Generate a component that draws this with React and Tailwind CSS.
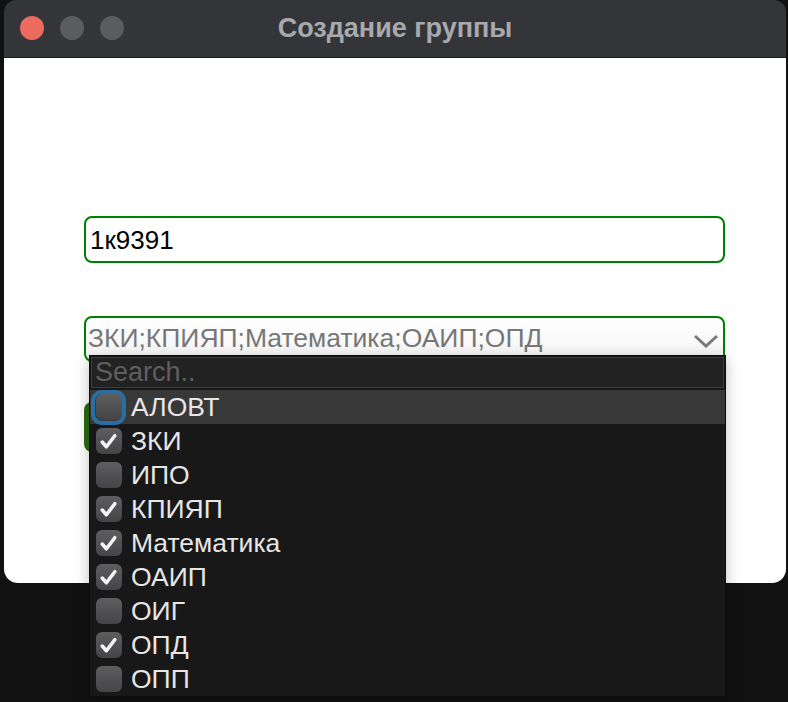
import { useState } from "react";

const subjects = [
  { name: "АЛОВТ", checked: false },
  { name: "ЗКИ", checked: true },
  { name: "ИПО", checked: false },
  { name: "КПИЯП", checked: true },
  { name: "Математика", checked: true },
  { name: "ОАИП", checked: true },
  { name: "ОИГ", checked: false },
  { name: "ОПД", checked: true },
  { name: "ОПП", checked: false },
];

function Check({ checked, focused }) {
  return (
    <div
      className={
        "flex h-[27px] w-[27px] shrink-0 items-center justify-center rounded-[7px] " +
        (focused ? "ring-[4px] ring-[#2a6fa3]" : "")
      }
    >
      <div className="flex h-[26px] w-[26px] items-center justify-center rounded-[6px] bg-gradient-to-b from-[#5e5e60] to-[#454547]">
        {checked && (
          <svg width="21" height="21" viewBox="0 0 20 20" fill="none">
            <path d="M4 10.5 L8 15 L16 4.5" stroke="#f4f4f4" strokeWidth="3.4" strokeLinecap="round" strokeLinejoin="round" />
          </svg>
        )}
      </div>
    </div>
  );
}

export default function App() {
  const [name] = useState("1к9391");
  const selected = subjects.filter((s) => s.checked).map((s) => s.name).join(";");

  return (
    <div
      className="relative h-[702px] w-[788px] overflow-hidden bg-[#111111]"
      style={{ fontFamily: '"Liberation Sans", Arial, sans-serif' }}
    >
      {/* Window */}
      <div className="ml-[4px] w-[782px]">
        <div className="relative flex h-[58px] items-center justify-center rounded-t-[12px] border-b border-[#1a1a1a] bg-[#343539]">
          <div className="absolute left-[16px] top-[16px] flex gap-[16px]">
            <div className="h-[24px] w-[24px] rounded-full bg-[#ec6a5e]" />
            <div className="h-[24px] w-[24px] rounded-full bg-[#5b5c60]" />
            <div className="h-[24px] w-[24px] rounded-full bg-[#5b5c60]" />
          </div>
          <span className="text-[27px] font-bold text-[#a8a9ad]">Создание группы</span>
        </div>

        <div className="flex h-[525px] flex-col rounded-b-[14px] bg-white pl-[80px] pr-[61px] pt-[158px]">
          <div className="flex h-[47px] items-center rounded-[8px] border-2 border-[#008000] px-[4px] text-[26px] leading-none text-black">
            {name}
          </div>

          <div className="mt-[53px] flex h-[46px] items-start justify-between rounded-[8px] border-2 border-[#008000] bg-gradient-to-b from-white to-[#f4f4f4] pl-[2px] pr-[4px] pt-[7px]">
            <span className="text-[26.5px] leading-none text-[#777777]">{selected}</span>
            <svg className="mt-[9px]" width="26" height="14" viewBox="0 0 26 14" fill="none">
              <path d="M2 2 L13 12 L24 2" stroke="#7a7a7a" strokeWidth="3" />
            </svg>
          </div>

          <div className="mt-[40px] h-[50px] w-[120px] rounded-[8px] bg-[#2d6a10]" />
        </div>
      </div>

      {/* Dropdown list */}
      <div className="absolute left-[89px] top-[355px] flex w-[637px] flex-col border border-[#0c0c0c] bg-[#181818] shadow-[0_4px_14px_rgba(0,0,0,0.25)]">
        <div className="mx-[1px] mb-[2px] mt-[1px] flex h-[31px] items-center overflow-hidden border border-[#3c3c3c] bg-[#222222] px-[3px]">
          <span className="text-[27px] leading-none text-[#5f5f5f]">Search..</span>
        </div>
        {subjects.map((s, i) => (
          <div
            key={s.name}
            className={
              "flex h-[34px] items-center gap-[9px] pl-[5px] " +
              (i === 0 ? "bg-[#383838]" : "")
            }
          >
            <Check checked={s.checked} focused={i === 0} />
            <span className="text-[26.5px] leading-none text-[#e6e6e6]">{s.name}</span>
          </div>
        ))}
      </div>
    </div>
  );
}
